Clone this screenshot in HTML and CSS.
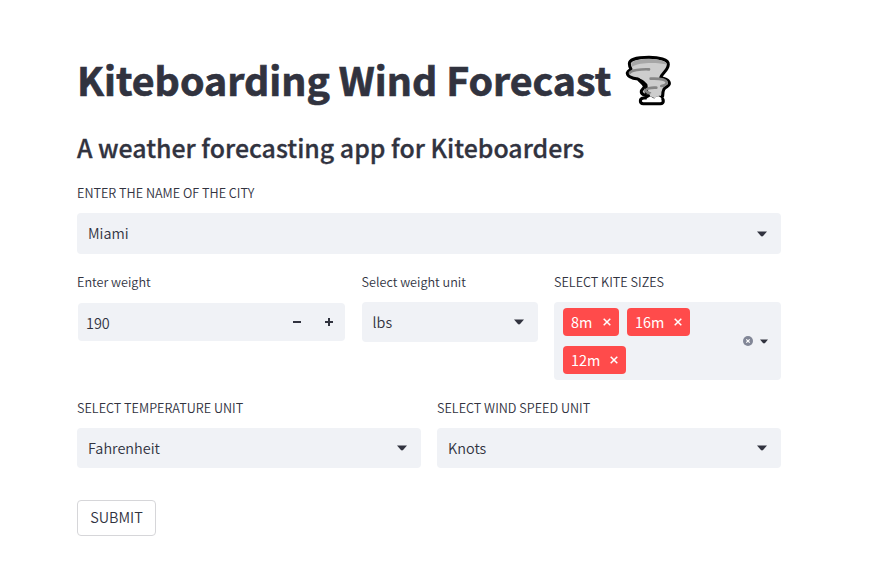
FILE: index.html
```html
<!DOCTYPE html>
<html lang="en">
<head>
<meta charset="utf-8">
<title>Kiteboarding Wind Forecast</title>
<link rel="stylesheet" href="styles.css">
</head>
<body>
<main class="app">
  <h1 class="title"><span>Kiteboarding Wind Forecast</span>
    <svg class="tornado" viewBox="0 0 225 210" width="75" height="70" aria-hidden="true">
      <path d="M58 56C58 42 88 37 117 37S176 43 175 58C174 77 156 84 152 98C180 102 184 118 172 124C163 129 158 132 158 154H120C104 153 92 147 94 138C96 132 104 128 103 123C99 115 91 110 84 102C63 101 50 92 52 83C54 77 60 75 63 72C60 67 58 62 58 56Z" fill="#cdcdcd" stroke="#000" stroke-width="9" stroke-linejoin="round"/>
      <path d="M64 59C63 47 91 42 117 42S171 48 170 59C150 53 89 50 67 65Z" fill="#a6a6a6"/>
      <path d="M80 98C92 99 106 109 112 118C114 125 112 136 118 150L105 146C102 136 107 130 105 123C101 112 90 106 80 98Z" fill="#000"/>
      <path d="M117 73C91 72 64 76 60 83M122 101C148 100 167 103 170 111C171 118 160 122 154 123M139 128C121 127 108 131 108 137C108 141 113 143 120 145" fill="none" stroke="#858585" stroke-width="8" stroke-linecap="round"/>
      <path d="M102 159C94 159 91 162 91 168C91 174 94 176 100 176H151C157 176 160 173 160 168C160 162 157 159 150 159Z" fill="#fff" stroke="#000" stroke-width="9"/>
      <path d="M121 145H153V153C145 151 139 154 133 162C130 156 126 154 119 156Z" fill="#cdcdcd"/>
      <path d="M110 161C116 155 126 154 133 162C137 154 146 150 154 160V165H110Z" fill="#fff"/>
    </svg>
  </h1>
  <h2 class="subtitle"><span>A weather forecasting app for Kiteboarders</span></h2>
  <form class="form">
    <div class="field">
      <div class="label"><span>ENTER THE NAME OF THE CITY</span></div>
      <div class="select city"><span>Miami</span><svg class="caret" viewBox="0 0 10 6"><path d="M0 .4H10L6.300 4.800Q5 6 3.700 4.800Z"/></svg></div>
    </div>
    <div class="row measures">
      <div class="field">
        <div class="label"><span>Enter weight</span></div>
        <div class="number"><span>190</span><svg class="step" viewBox="0 0 8 8"><path d="M0 3H8V5H0Z"/></svg><svg class="step" viewBox="0 0 8 8"><path d="M0 3H3V0H5V3H8V5H5V8H3V5H0Z"/></svg></div>
      </div>
      <div class="field">
        <div class="label"><span>Select weight unit</span></div>
        <div class="select"><span>lbs</span><svg class="caret" viewBox="0 0 10 6"><path d="M0 .4H10L6.300 4.800Q5 6 3.700 4.800Z"/></svg></div>
      </div>
      <div class="field">
        <div class="label"><span>SELECT KITE SIZES</span></div>
        <div class="multi">
          <div class="tags">
            <div class="tag"><span>8m</span><svg viewBox="0 0 8 8"><path d="M.7 .7L7.300 7.300M7.300 .7L.7 7.300"/></svg></div>
            <div class="tag wide"><span>16m</span><svg viewBox="0 0 8 8"><path d="M.7 .7L7.300 7.300M7.300 .7L.7 7.300"/></svg></div>
            <div class="tag wide"><span>12m</span><svg viewBox="0 0 8 8"><path d="M.7 .7L7.300 7.300M7.300 .7L.7 7.300"/></svg></div>
          </div>
          <svg class="clear" viewBox="0 0 10 10"><circle cx="5" cy="5" r="5"/><path d="M3.300 3.300L6.700 6.700M6.700 3.300L3.300 6.700"/></svg>
          <svg class="caret small" viewBox="0 0 10 6"><path d="M0 .4H10L6.300 4.800Q5 6 3.700 4.800Z"/></svg>
        </div>
      </div>
    </div>
    <div class="row units">
      <div class="field">
        <div class="label"><span>SELECT TEMPERATURE UNIT</span></div>
        <div class="select"><span>Fahrenheit</span><svg class="caret" viewBox="0 0 10 6"><path d="M0 .4H10L6.300 4.800Q5 6 3.700 4.800Z"/></svg></div>
      </div>
      <div class="field">
        <div class="label"><span>SELECT WIND SPEED UNIT</span></div>
        <div class="select"><span>Knots</span><svg class="caret" viewBox="0 0 10 6"><path d="M0 .4H10L6.300 4.800Q5 6 3.700 4.800Z"/></svg></div>
      </div>
    </div>
    <button class="submit" type="button">SUBMIT</button>
  </form>
</main>
</body>
</html>
```
FILE: styles.css
```css
* { box-sizing: border-box; }
body {
  margin: 0;
  background: #fff;
  color: #31333f;
  font-family: "Noto Sans CJK SC", "Open Sans", sans-serif;
  font-size: 14.45px;
  font-weight: 350;
}
svg { display: block; flex: none; }
.app { width: 704px; margin: 45px 0 0 77px; }
.title {
  display: flex;
  height: 70px;
  margin: 0;
  font-size: 39.35px;
  line-height: 68px;
  font-weight: 700;
  -webkit-text-stroke: .7px #31333f;
  white-space: nowrap;
}
.title span { width: 533px; }
.title svg { -webkit-text-stroke: 0; }
.subtitle {
  height: 36px;
  margin: 15px 0 18px;
  font-size: 24.9px;
  line-height: 34px;
  font-weight: 500;
  -webkit-text-stroke: .3px #31333f;
  white-space: nowrap;
}
.label {
  height: 20px;
  margin-bottom: 9px;
  font-size: 12.65px;
  line-height: 18px;
  white-space: nowrap;
}
.select, .number, .multi {
  display: flex;
  align-items: center;
  height: 40px;
  border-radius: 4px;
  background: #f0f2f6;
}
.select { padding: 0 14px 0 11px; }
.select.city { height: 41px; }
.select span, .number span { flex: 1; }
.select span, .tag span { padding-bottom: 2px; }
.caret { width: 10px; height: 6px; fill: #31333f; }
.row { display: grid; }
.measures { grid-template-columns: 268px 176px 227px; column-gap: 16.5px; margin-top: 19px; }
.units { grid-template-columns: 344px 344px; column-gap: 16px; margin-top: 19px; }
.number {
  height: 38px;
  margin: 10px 0 0 1px;
  padding: 0 12px 0 8px;
}
.step { width: 8px; height: 8px; fill: #31333f; }
.step + .step { margin-left: 24px; }
.multi { height: 78px; padding: 0 13px 0 9px; }
.tags { display: flex; flex-wrap: wrap; gap: 10px 8px; width: 180px; }
.tag {
  display: flex;
  align-items: center;
  justify-content: space-between;
  width: 56px;
  height: 28px;
  padding: 0 8.500px 0 8px;
  border-radius: 4px;
  background: #ff4b4b;
  color: #fff;
  font-weight: 400;
}
.tag.wide { width: 63.300px; }
.tag svg { width: 8px; height: 8px; stroke: #fff; stroke-width: 1.500; }
.clear { width: 10px; height: 10px; fill: #828797; stroke: none; }
.clear path { stroke: #fff; stroke-width: 1.200; }
.caret.small { width: 8px; height: 5px; margin-left: 6.500px; }
.submit {
  display: block;
  width: 79px;
  height: 36px;
  margin-top: 32px;
  padding: 0 0 3px;
  border: 1px solid #d6d6d9;
  border-radius: 4px;
  background: #fff;
  color: inherit;
  font: inherit;
}
```
